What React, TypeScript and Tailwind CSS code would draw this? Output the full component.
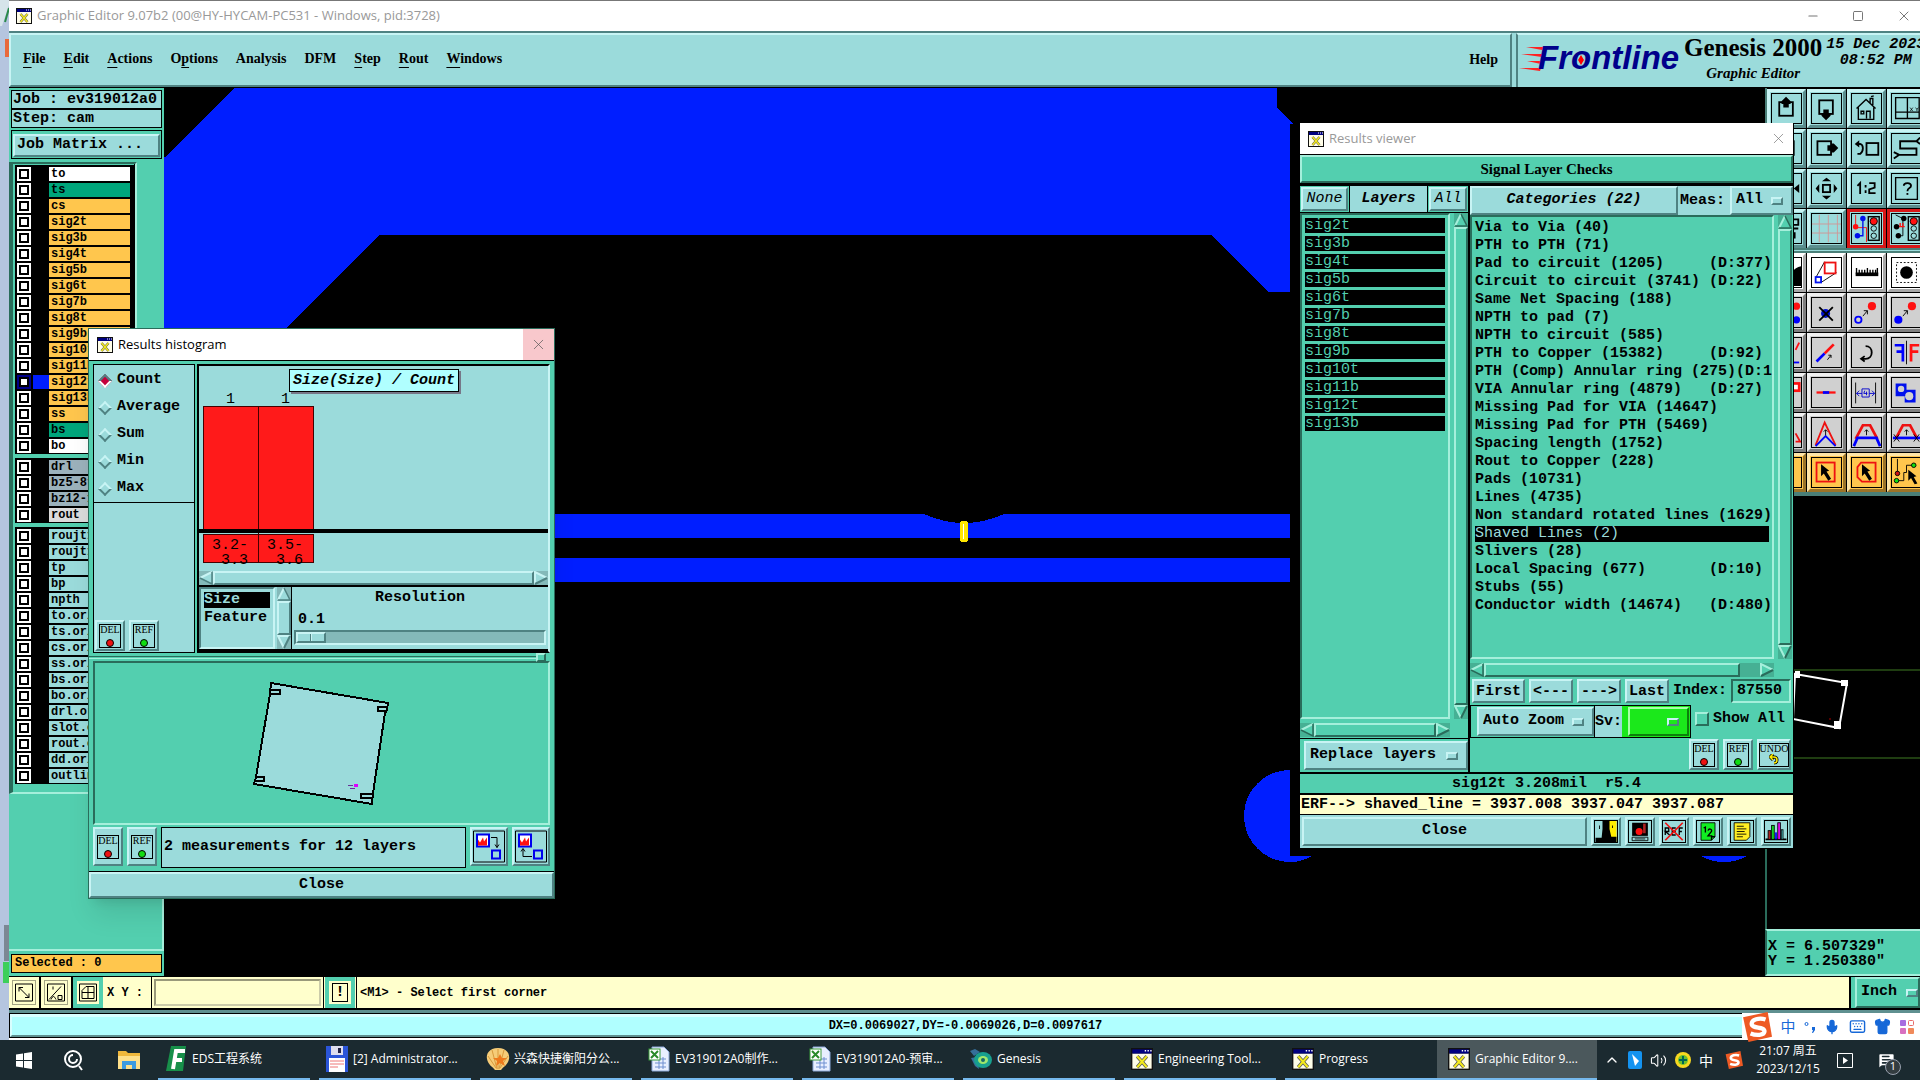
import { useState } from "react";
import type { ReactNode } from "react";
import clsx from "clsx";
import { ChevronUp, Minus, Square, X, Volume2, Mic, Keyboard, Shirt, MessageSquareText } from "lucide-react";

const mono = "font-['Liberation_Mono',monospace] font-bold";
const serif = "font-['Liberation_Serif',serif] font-bold";
const sans = "font-['Open_Sans','Noto_Sans_CJK_SC',sans-serif] font-normal";

const raised = "border-2 border-t-[#c8f4f4] border-l-[#c8f4f4] border-b-[#4f8282] border-r-[#4f8282] bg-[#9bdbdb]";
const raisedTeal = "border-2 border-t-[#a5efdb] border-l-[#a5efdb] border-b-[#2a6c5b] border-r-[#2a6c5b] bg-[#53cfaf]";
const sunkenTeal = "border-2 border-t-[#2a6c5b] border-l-[#2a6c5b] border-b-[#a5efdb] border-r-[#a5efdb] bg-[#53cfaf]";

type Layer = { name: string; kind: "white" | "green" | "orange" | "gray" | "light" | "aqua" };

const layerColors = {
  white: "bg-white",
  green: "bg-[#00a67c]",
  orange: "bg-[#ffc64d]",
  gray: "bg-[#9cb2bc]",
  light: "bg-[#dcdcdc]",
  aqua: "bg-[#9bdbdb]",
};

const signals = ["sig2t", "sig3b", "sig4t", "sig5b", "sig6t", "sig7b", "sig8t", "sig9b", "sig10t", "sig11b", "sig12t", "sig13b"];

const layerGroups: Layer[][] = [
  [
    { name: "to", kind: "white" },
    { name: "ts", kind: "green" },
    { name: "cs", kind: "orange" },
    ...signals.map((name) => ({ name, kind: "orange" as const })),
    { name: "ss", kind: "orange" },
    { name: "bs", kind: "green" },
    { name: "bo", kind: "white" },
  ],
  [
    { name: "drl", kind: "gray" },
    { name: "bz5-8t", kind: "gray" },
    { name: "bz12-1", kind: "gray" },
    { name: "rout", kind: "light" },
  ],
  ["roujt1", "roujt1", "tp", "bp", "npth", "to.ori", "ts.ori", "cs.ori", "ss.ori", "bs.ori", "bo.ori", "drl.ori", "slot.ori", "rout.ori", "dd.ori", "outline"].map(
    (name) => ({ name, kind: "aqua" as const })
  ),
];

const categories: [string, string][] = [
  ["Via to Via (40)", ""],
  ["PTH to PTH (71)", ""],
  ["Pad to circuit (1205)", "(D:377)"],
  ["Circuit to circuit (3741)", "(D:22)"],
  ["Same Net Spacing (188)", ""],
  ["NPTH to pad (7)", ""],
  ["NPTH to circuit (585)", ""],
  ["PTH to Copper (15382)", "(D:92)"],
  ["PTH (Comp) Annular ring (275)", "(D:1"],
  ["VIA Annular ring (4879)", "(D:27)"],
  ["Missing Pad for VIA (14647)", ""],
  ["Missing Pad for PTH (5469)", ""],
  ["Spacing length (1752)", ""],
  ["Rout to Copper (228)", ""],
  ["Pads (10731)", ""],
  ["Lines (4735)", ""],
  ["Non standard rotated lines (1629)", ""],
  ["Shaved Lines (2)", ""],
  ["Slivers (28)", ""],
  ["Local Spacing (677)", "(D:10)"],
  ["Stubs (55)", ""],
  ["Conductor width (14674)", "(D:480)"],
];

function WindowIcon({ size = 16 }: { size?: number }) {
  return (
    <svg width={size} height={size} viewBox="0 0 16 16" className="shrink-0">
      <rect width="16" height="16" fill="#111" />
      <rect x="1" y="4" width="14" height="11" fill="#fffde8" />
      <path d="M4.500 6l7 8M11.500 6l-7 8" stroke="#555" strokeWidth="2.500" />
      <path d="M4.500 6l7 8M11.500 6l-7 8" stroke="#f4ea1c" strokeWidth="1.500" />
      <rect x="1" y="1" width="14" height="3" fill="#000080" />
      <path d="M10 2h1M12 2h1M14 2h1" stroke="#fff" />
    </svg>
  );
}

/* Toolbar glyphs, drawn on a 32x30 grid */
const traffic = (
  <>
    <rect x="18" y="2" width="12" height="26" fill="#9bdbdb" stroke="#000" strokeWidth="1.500" />
    <circle cx="24" cy="7" r="4" fill="#f11" stroke="#000" />
    <circle cx="24" cy="15" r="3" fill="none" stroke="#000" />
    <circle cx="24" cy="23" r="3" fill="none" stroke="#000" />
  </>
);

const glyphs: Record<string, ReactNode> = {
  up: <><rect x="8" y="8" width="15" height="15" fill="none" stroke="#000" strokeWidth="2" /><path d="M15.500 2l5 5v3h-2v4h-6v-4h-2V7z" /></>,
  down: <><rect x="8" y="6" width="15" height="15" fill="none" stroke="#000" strokeWidth="2" /><path d="M15.500 28l-5-5v-3h2v-4h6v4h2v3z" /></>,
  home: <><path d="M5 15L15.500 5 26 15M7 14v13h17V14M20 9V4h3v7M21 2l3-1M10 18h3v3h-3zM16 26v-8h4v8" fill="none" stroke="#000" strokeWidth="1.500" /></>,
  panes: <><path d="M4 3h26v23H4zM17 3v23M4 19h26" fill="none" stroke="#000" strokeWidth="1.500" /><path d="M20 14l3 4M23 14l-3 4M26 14l1.500 2 1.500-2M27.500 16v2" fill="none" stroke="#000" strokeWidth=".8" /></>,
  left: <><rect x="9" y="7" width="15" height="15" fill="none" stroke="#000" strokeWidth="2" /><path d="M3 14l6-6v12z" /></>,
  right: <><rect x="6" y="7" width="15" height="15" fill="none" stroke="#000" strokeWidth="2" /><path d="M29 14.500l-5-5h-3v2h-4v6h4v2h3z" /></>,
  back: <><rect x="16" y="9" width="13" height="13" fill="none" stroke="#000" strokeWidth="2" /><path d="M5 10h4c4 1 4 8 0 11H6" fill="none" stroke="#000" strokeWidth="2" /><path d="M3 10l5-4v8z" /></>,
  snake: <path d="M8 22h19v-7H9V7h18l4-4M27 7l4 3M8 22l-6-3M8 22l-6 4" fill="none" stroke="#000" strokeWidth="2" />,
  zoomOut: <path d="M30 10v10l-6-5z" />,
  pan: <><rect x="12" y="11" width="8" height="8" fill="none" stroke="#000" strokeWidth="2" /><path d="M16 3l5 4H11zM16 27l5-4H11zM4 15l4-5v10zM28 15l-4-5v10z" /></>,
  ratio: <path d="M6 12l3-3v12M15 11v3M15 17v3M19 9h6v5l-6 2v4h7" fill="none" stroke="#000" strokeWidth="2" />,
  help: <><path d="M4 3h24v24H4z" fill="none" stroke="#000" strokeWidth="1.500" /><path d="M13 12c0-4 8-4 8 0 0 3-4 2-4 6" fill="none" stroke="#000" strokeWidth="2" /><path d="M16 20h2v2h-2z" /></>,
  info: <path d="M21 5h8v6h-8zM21 15h8M21 20h4v6" fill="none" stroke="#000" strokeWidth="2" />,
  grid: <path d="M8 0v30M18 0v30M28 0v30M0 10h32M0 20h32" stroke="#cf9696" fill="none" />,
  netBlue: <>{traffic}<path d="M4 0v14h12v16" fill="none" stroke="#f11" /><path d="M12 5v18H6" fill="none" stroke="#0010ee" strokeWidth="1.500" /><circle cx="12" cy="4" r="3" fill="#0010ee" /><circle cx="6" cy="23" r="3" fill="#0010ee" /><circle cx="4" cy="13" r="3" fill="#f11" /></>,
  netBlack: <>{traffic}<path d="M4 0l8 4v19H6" fill="none" stroke="#000" /><path d="M5 13h9M9 9v4M12 9v4" stroke="#f11" strokeWidth="1.500" /><circle cx="13" cy="4" r="3" /><circle cx="5" cy="13" r="3" /><circle cx="7" cy="23" r="3" /></>,
  mask: <path d="M18 30c0-14 6-20 14-22v22z" />,
  scale: <><path d="M4 21L14 3M10 26L27 15" stroke="#000" fill="none" /><rect x="14" y="4" width="12" height="12" fill="#fff" stroke="#e11" strokeWidth="2" /><rect x="4" y="20" width="6" height="6" fill="#fff" stroke="#0010ee" strokeWidth="2" /></>,
  ruler: <><rect x="4" y="15" width="25" height="4" /><path d="M5 10v7M8 12v5M11 12v5M14 12v5M17 10v7M20 12v5M23 12v5M26 12v5M28 10v7" stroke="#000" strokeWidth="1.500" /></>,
  select: <><rect x="5" y="4" width="22" height="22" fill="none" stroke="#000" strokeDasharray="2 2" /><circle cx="16" cy="15" r="7" /></>,
  dots: <><circle cx="27" cy="8" r="4" fill="#f11" /><circle cx="27" cy="23" r="4" fill="#00f" /></>,
  erase: <><circle cx="15" cy="16" r="5" fill="#0010cc" /><path d="M8 9l15 15M23 9L8 24" stroke="#000" strokeWidth="2" /></>,
  move: <><circle cx="22" cy="8" r="4.500" fill="#f11" /><circle cx="7" cy="23" r="3.500" fill="none" stroke="#00f" strokeWidth="2" /><path d="M12 19l5-6M17 17v-4h-4" stroke="#000" fill="none" /></>,
  copy: <><circle cx="22" cy="8" r="4.500" fill="#f11" /><circle cx="7" cy="23" r="4.500" fill="#00f" /><path d="M12 19l5-6M17 17v-4h-4" stroke="#000" fill="none" /></>,
  angle: <><path d="M26 12l4-8" stroke="#f11" strokeWidth="2" /><path d="M24 26h6" stroke="#00f" strokeWidth="2" /></>,
  stretch: <><path d="M5 25L14 16" stroke="#00f" strokeWidth="3" /><path d="M14 16L24 6" stroke="#f11" strokeWidth="3" /><path d="M17 23l4-5M21 21v-3h-3" stroke="#000" fill="none" /></>,
  rotate: <path d="M15 8c9 0 9 14 0 14h-4M14 19l-4 3 4 3" fill="none" stroke="#000" strokeWidth="2" />,
  mirror: <><path d="M16 2v26" stroke="#000" /><path d="M3 7h9v18M12 14H5" fill="none" stroke="#00f" strokeWidth="3" /><path d="M30 7h-9v18M21 14h8" fill="none" stroke="#f11" strokeWidth="3" /></>,
  shape: <rect x="22" y="5" width="8" height="8" fill="#fff" stroke="#f11" strokeWidth="3" />,
  line: <><path d="M5 15h21" stroke="#f11" strokeWidth="2.500" /><path d="M12 15h7" stroke="#00f" strokeWidth="3" /></>,
  spacing: <><path d="M4 4v23M26 4v23" stroke="#000" /><path d="M5 16h6M19 16h6M8 13l-3 3 3 3M22 13l3 3-3 3M11 11h8v9h-8zM14 13l-1 3h4M16 14v4" fill="none" stroke="#00c" /></>,
  merge: <><path d="M4 5h12v7h10v14H14v-7H4z" fill="#0010ee" /><circle cx="10" cy="11" r="3.500" fill="#d0d0d0" /><circle cx="19" cy="19" r="4.500" fill="#d0d0d0" /></>,
  arch: <path d="M26 16l5 9h-5" stroke="#e11" strokeWidth="2" fill="none" />,
  peak: <><path d="M4 29L14 4l12 25" fill="none" stroke="#e11" strokeWidth="2" /><path d="M4 30l11-11 11 11" fill="none" stroke="#00f" strokeWidth="2" /><path d="M15 18v-6M13 14l2-2 2 2" stroke="#000" fill="none" /></>,
  trapeze: <><path d="M4 22L12 7h8l8 15" fill="none" stroke="#e11" strokeWidth="3" /><path d="M2 30l4-9h21l4 9" fill="none" stroke="#00f" strokeWidth="3" /><path d="M16 18v-6M14 14l2-2 2 2" stroke="#000" fill="none" /></>,
  trapezeCut: <><path d="M4 22L12 7h8l8 15" fill="none" stroke="#e11" strokeWidth="3" /><path d="M1 21h30" stroke="#00f" strokeWidth="3" /><path d="M16 18v-6M14 14l2-2 2 2M2 17l6 8M8 17l-6 8M24 17l6 8M30 17l-6 8" stroke="#000" fill="none" /></>,
  blank: <></>,
  pick: <><rect x="5" y="4" width="20" height="21" fill="none" stroke="#e11" strokeWidth="2" /><path d="M10 6l9 7-3 1 5 8-3 2-5-8-3 3z" /></>,
  pickPoly: <><path d="M10 4h16v21H11l-5-5V9z" fill="none" stroke="#e11" strokeWidth="2" /><path d="M11 6l9 7-3 1 5 8-3 2-5-8-3 3z" /></>,
  pickNet: <><path d="M6 0v15M5 24h8V15h3V7h8" fill="none" stroke="#000" /><circle cx="6" cy="16" r="2.500" fill="#c11" stroke="#000" /><circle cx="5" cy="24" r="2.500" fill="#1d1" stroke="#000" /><circle cx="24" cy="7" r="2.500" fill="#1d1" stroke="#000" /><path d="M18 12l9 7-3 1 4 7-3 1-4-7-3 3z" /></>,
};

type Tool = { id: string; tone?: "aqua" | "red" | "white" | "gray" | "orange" };
const navTools: Tool[] = [
  "up", "down", "home", "panes", "left", "right", "back", "snake", "zoomOut", "pan", "ratio", "help", "info", "grid",
].map((id) => ({ id }));
navTools.push({ id: "netBlue", tone: "red" }, { id: "netBlack", tone: "red" });

const editTools: Tool[] = [
  ...["mask", "scale", "ruler", "select"].map((id) => ({ id, tone: "white" as const })),
  ...["dots", "erase", "move", "copy", "angle", "stretch", "rotate", "mirror", "shape", "line", "spacing", "merge", "arch", "peak", "trapeze", "trapezeCut"].map(
    (id) => ({ id, tone: "gray" as const })
  ),
  ...["blank", "pick", "pickPoly", "pickNet"].map((id) => ({ id, tone: "orange" as const })),
];

const toolTones = {
  aqua: "bg-[#9bdbdb] border-t-[#c8f4f4] border-l-[#c8f4f4] border-b-[#5b8e8e] border-r-[#5b8e8e]",
  red: "bg-[#9bdbdb] border-[#d81818]",
  white: "bg-white border-t-white border-l-white border-b-[#a8a8a8] border-r-[#a8a8a8]",
  gray: "bg-[#d0d0d0] border-t-[#f0f0f0] border-l-[#f0f0f0] border-b-[#808080] border-r-[#808080]",
  orange: "bg-[#ffc64d] border-t-[#ffe6a8] border-l-[#ffe6a8] border-b-[#9c7428] border-r-[#9c7428]",
};

function ToolButton({ id, tone = "aqua" }: Tool) {
  return (
    <button aria-label={id} className={clsx("h-[39px] w-[39px] border-3 p-px", toolTones[tone])}>
      <svg viewBox="0 0 32 30" className="h-full w-full border border-black">
        {glyphs[id]}
      </svg>
    </button>
  );
}

function SmallButton({ label, color, className }: { label: string; color?: string; className?: string }) {
  return (
    <button className={clsx(raised, "flex items-center justify-center", className)}>
      <span className="flex h-6 min-w-[22px] flex-col items-center border border-black">
        <span className="font-['Liberation_Serif',serif] text-[10px] leading-[10px] font-normal">{label}</span>
        {color ? (
          <svg width="8" height="8" viewBox="0 0 8 8" className="mt-1">
            <circle cx="4" cy="4" r="3.500" fill={color} stroke="#000" />
          </svg>
        ) : (
          <svg width="10" height="11" viewBox="0 0 10 11">
            <path d="M2 3h3c4 0 4 6 0 6M4 0L1 3l3 3" fill="none" stroke="#000" strokeWidth="3" />
            <path d="M2 3h3c4 0 4 6 0 6M4 0L1 3l3 3" fill="none" stroke="#fe0" strokeWidth="1.500" />
          </svg>
        )}
      </span>
    </button>
  );
}

function OptionMenu({ label, options, className, teal }: { label: string; options: string[]; className: string; teal?: boolean }) {
  return (
    <div className={clsx("relative", className)}>
      <select aria-label={label} className={clsx("h-full w-full appearance-none bg-transparent pl-1 text-[15px]", mono)}>
        {options.map((o) => (
          <option key={o}>{o}</option>
        ))}
      </select>
      <span
        className={clsx(
          "pointer-events-none absolute top-1/2 h-2 w-3 -translate-y-1/2 border-2 border-t-[#c8f4f4] border-r-[#4f8282] border-b-[#4f8282] border-l-[#c8f4f4]",
          teal ? "right-0" : "right-2"
        )}
      />
    </div>
  );
}

function ScrollBar({ vertical, aqua, fill = "flex-1", className }: { vertical?: boolean; aqua?: boolean; fill?: string; className?: string }) {
  const dark = aqua ? "#4f8282" : "#2a6c5b";
  const light = aqua ? "#c8f4f4" : "#a5efdb";
  const face = aqua ? "#9bdbdb" : "#53cfaf";
  return (
    <div className={clsx("flex", vertical ? "w-[14px] flex-col" : "h-[14px]", aqua ? "bg-[#84b9b9]" : "bg-[#46b094]", className)}>
      <svg width="14" height="14" viewBox="0 0 14 14" className="shrink-0">
        <path d={vertical ? "M7 1L1 13h12z" : "M1 7l12-6v12z"} fill={face} />
        <path d={vertical ? "M7 1L1 13" : "M1 7l12-6"} stroke={light} strokeWidth="2" />
        <path d={vertical ? "M7 1l6 12H1" : "M1 7l12 6V1"} fill="none" stroke={dark} strokeWidth="1.500" />
      </svg>
      <div className={clsx(aqua ? raised : raisedTeal, fill)} />
      {fill !== "flex-1" && <div className="flex-1" />}
      <svg width="14" height="14" viewBox="0 0 14 14" className="shrink-0">
        <path d={vertical ? "M7 13L1 1h12z" : "M13 7L1 1v12z"} fill={face} />
        <path d={vertical ? "M7 13L1 1h12" : "M13 7L1 1v12"} fill="none" stroke={light} strokeWidth="2" />
        <path d={vertical ? "M7 13l6-12" : "M13 7L1 13"} stroke={dark} strokeWidth="2" />
      </svg>
    </div>
  );
}

const menus: [string, string, string][] = [
  ["", "F", "ile"], ["", "E", "dit"], ["", "A", "ctions"], ["O", "p", "tions"], ["Analysis", "", ""],
  ["DFM", "", ""], ["", "S", "tep"], ["", "R", "out"], ["", "W", "indows"],
];

function MenuBar() {
  return (
    <div className="flex h-[57px] shrink-0 border-t-2 border-b border-t-[#4f8282] border-b-black bg-[#9bdbdb]">
      <nav className={clsx("flex flex-1 items-center gap-[18px] pr-3 pb-0.5 pl-3 text-[14px]", raised, serif)}>
        {menus.map(([pre, key, post]) => (
          <button key={pre + key + post} className="leading-5">
            {pre}
            <span className="underline underline-offset-4">{key}</span>
            {post}
          </button>
        ))}
        <button className="ml-auto">Help</button>
      </nav>
      <div className="ml-1 flex w-[404px] overflow-hidden border-t-2 border-l-2 border-t-[#c8f4f4] border-l-[#4f8282] whitespace-nowrap">
        <svg width="166" height="52" viewBox="0 0 166 52" className="shrink-0">
          <path d="M8 12h18l-2 3zM3 19h22l-1 3zM9 26h15l-1 3zM1 33h22l-1 3z" fill="#f22" />
          <text x="20" y="34" className="font-['Liberation_Sans',sans-serif] text-[33px] font-bold italic" fill="#00008b">
            Frontline
          </text>
          <path d="M63 20l3 5-3 5-3-5z" fill="#f00" />
        </svg>
        <div className={clsx("text-center", serif)}>
          <div className="text-[25px] leading-[26px]">Genesis 2000</div>
          <div className="text-[15px] leading-6 italic">Graphic Editor</div>
        </div>
        <div className={clsx("pt-0.5 pl-1 text-center text-[15px] leading-4 italic", mono)}>
          <div>15 Dec 2023</div>
          <div>08:52 PM</div>
        </div>
      </div>
    </div>
  );
}

function LayerRow({ layer }: { layer: Layer }) {
  const active = layer.name === "sig12t";
  return (
    <li>
      <label className="flex h-4 items-center pl-[2px]">
        <input
          type="checkbox"
          className={clsx(
            "h-[14px] w-[14px] appearance-none border-2 outline-2 -outline-offset-4 outline-black",
            active ? "border-[#000088] bg-white outline-[#000088]" : "border-white bg-white"
          )}
        />
        <span className={clsx("ml-0.5 h-[14px] w-4", active && "bg-[#001eff]")} />
        <span className={clsx("h-[14px] w-[81px] pl-0.5 text-[12px] leading-[14px] text-black", layerColors[layer.kind])}>{layer.name}</span>
      </label>
    </li>
  );
}

function Sidebar() {
  return (
    <aside className={clsx("flex w-[155px] shrink-0 flex-col bg-[#53cfaf]", mono)}>
      <div className="mx-[2px] mt-[2px] h-[19px] border border-black bg-[#9bdbdb] pl-px text-[15px] leading-[18px] whitespace-nowrap">Job : ev319012a0</div>
      <div className="mx-[2px] h-[19px] border border-black bg-[#9bdbdb] pl-px text-[15px] leading-[18px]">Step: cam</div>
      <div className="mx-[2px] mt-[2px] border border-black p-px">
        <button className={clsx("h-[23px] w-full pl-0.5 text-left text-[15px] leading-[18px]", raised)}>Job Matrix ...</button>
      </div>
      <div className="mt-[3px] mr-[27px] border-t-2 border-r-2 border-b-2 border-l-4 border-t-[#2a6c5b] border-r-[#a5efdb] border-b-[#a5efdb] border-l-[#2a6c5b] pb-2">
        <div className="flex flex-col gap-1 border-r border-black pt-px">
          {layerGroups.map((group, i) => (
            <ul key={i} className="ml-0.5 bg-black pt-px">
              {group.map((layer, j) => (
                <LayerRow key={j} layer={layer} />
              ))}
            </ul>
          ))}
        </div>
      </div>
      <div className="flex-1 border-r-2 border-b-2 border-[#a5efdb]" />
      <div className="mx-[2px] mt-[3px] mb-[3px] h-[19px] border border-black bg-[#ffc64d] pl-[3px] text-[12px] leading-[17px]">Selected : 0</div>
    </aside>
  );
}

function Canvas() {
  return (
    <svg className="h-full flex-1 bg-black" shapeRendering="crispEdges">
      <g fill="#001eff">
        <path d="M71 0H1113V20L1130 36H1126V204H1105L1047 147H215L70 293H0V70z" />
        <path d="M300 426H760Q800 444 840 426H1126V450H300z" />
        <path d="M300 470H1126V494H300z" />
        <path d="M1126 682A46 46 0 0 0 1126 774H1130A46 46 0 0 0 1148 768H1126z" />
        <path d="M1537 768A46 46 0 0 0 1583 768z" />
      </g>
      <rect x="796" y="433" width="8" height="21" rx="3" fill="#ffe600" />
      <path d="M799 436v15" stroke="#fff" />
    </svg>
  );
}

function RightPanel() {
  return (
    <div className="flex w-[155px] shrink-0 flex-col overflow-hidden bg-black">
      <div className="border-b-4 border-l-2 border-[#4a7f78]">
        <div className="grid grid-cols-[repeat(4,40px)] gap-y-px bg-black pt-px">
          {navTools.map((t) => (
            <ToolButton key={t.id} {...t} />
          ))}
        </div>
        <div className="h-[5px] border-y-2 border-[#4a7f78] bg-[#9bdbdb]" />
        <div className="grid grid-cols-[repeat(4,40px)] gap-y-px bg-black">
          {editTools.map((t) => (
            <ToolButton key={t.id} {...t} />
          ))}
        </div>
      </div>
      <svg className="w-full flex-1 border-l-2 border-[#2a6c5b]">
        <path d="M0 174h156M0 262h156" stroke="#3f7a22" />
        <path d="M28 178l52 9-8 45-46-9z" fill="none" stroke="#fff" strokeWidth="2" />
        <path d="M28 175h5v7h-5zM74 184h7v6h-7zM67 225h7v8h-7z" fill="#fff" />
        <path d="M62 223h2" stroke="#a00" />
      </svg>
      <div className={clsx("h-[47px] border-y-2 border-l-2 border-[#a5efdb] border-l-[#2a6c5b] bg-[#53cfaf] pt-2 pl-px text-[15px] leading-[15px]", mono)}>
        <div>X = 6.507329"</div>
        <div>Y = 1.250380"</div>
      </div>
    </div>
  );
}

function CommandBar() {
  return (
    <div className={clsx("mt-px flex h-[33px] shrink-0 border-b-2 border-black bg-[#ffffcc] text-[12px]", mono)}>
      <button aria-label="Corner mode" className="w-8 border-r-2 border-black p-1">
        <svg viewBox="0 0 22 22" className="h-full w-full outline-1 outline-[#a5a584]">
          <path d="M2.500 2.500h17v17h-17zM6 6l10 10M6 10V6h4M16 12v4h-4" fill="none" stroke="#000" />
        </svg>
      </button>
      <button aria-label="Slope mode" className="w-8 border-r-2 border-black p-1">
        <svg viewBox="0 0 22 22" className="h-full w-full outline-1 outline-[#a5a584]">
          <path d="M2.500 2.500h17v17h-17zM4 18L16 5M8 5v3M6 18c2-4 3-4 5 0M13 14h4v4h-4z" fill="none" stroke="#000" />
        </svg>
      </button>
      <button aria-label="Grid mode" className="w-[30px] border-4 border-[#53cfaf]">
        <svg viewBox="0 0 22 22" className="h-full w-full">
          <path d="M2.500 2.500h17v17h-17zM5 9l4-4h8v12H5zM11 5v12M5 11h12" fill="none" stroke="#000" />
        </svg>
      </button>
      <label htmlFor="xy" className="flex w-12 items-center pl-1 whitespace-pre">X Y :</label>
      <div className="w-[173px] border-x border-black p-0.5">
        <input id="xy" className="h-full w-full border-2 border-t-[#99997a] border-r-[#ccccaa] border-b-[#ccccaa] border-l-[#99997a] bg-[#ffffcc] px-1 outline-none" />
      </div>
      <button className="mx-px w-[30px] border-4 border-[#53cfaf]">
        <span className="mx-auto block h-[19px] w-4 border border-black text-[15px] leading-[17px]">!</span>
      </button>
      <div className="flex flex-1 items-center border-l border-black pl-[3px]">&lt;M1&gt; - Select first corner</div>
      <div className="w-[71px] border-l-2 border-black bg-[#53cfaf] pl-1">
        <OptionMenu label="Units" options={["Inch"]} className={clsx("h-full", raisedTeal)} teal />
      </div>
    </div>
  );
}

function TitleBar({ title, muted, hot }: { title: string; muted?: boolean; hot?: boolean }) {
  return (
    <div className={clsx("flex h-[31px] items-center bg-white pl-2 text-[13px]", sans, muted && "text-[#999]")}>
      <WindowIcon />
      <span className="ml-[5px]">{title}</span>
      <button aria-label="Close" className={clsx("ml-auto flex h-full items-center justify-center", hot ? "w-[31px] bg-[#f8c8cc]" : "w-[29px]")}>
        <X size={17} strokeWidth={1} className={hot ? "text-[#555]" : "text-[#777]"} />
      </button>
    </div>
  );
}

const stats = ["Count", "Average", "Sum", "Min", "Max"];

function HistogramWindow() {
  const [stat, setStat] = useState("Count");

  return (
    <section className={clsx("absolute top-[328px] left-[88px] w-[467px] border border-[#2a6c5b] bg-[#53cfaf] text-[15px] shadow-xl", mono)}>
      <TitleBar title="Results histogram" hot />
      <div className="flex h-[293px] gap-[2px] border-t border-black px-[4px] pt-[3px]">
        <div className="flex w-[102px] flex-col border border-black bg-[#9bdbdb]">
          <fieldset className="border-b border-black pt-0.5">
            {stats.map((s) => (
              <label key={s} className="flex h-[27px] items-center gap-[7px] pl-1.5">
                <input
                  type="radio"
                  name="stat"
                  checked={stat === s}
                  onChange={() => setStat(s)}
                  className="h-[10px] w-[10px] rotate-45 appearance-none border-2 border-t-[#c8f4f4] border-r-[#4f8282] border-b-[#4f8282] border-l-[#c8f4f4] checked:border-t-[#4f8282] checked:border-r-white checked:border-b-white checked:border-l-[#4f8282] checked:bg-[#c4003c]"
                />
                {s}
              </label>
            ))}
          </fieldset>
          <div className="mt-auto flex gap-1 p-px">
            <SmallButton label="DEL" color="#e11" className="h-[31px] w-[30px]" />
            <SmallButton label="REF" color="#1d1" className="h-[31px] w-[30px]" />
          </div>
        </div>
        <div className="flex flex-1 flex-col border-2 border-black border-r-[#c8f4f4] bg-[#9bdbdb]">
          <div className="relative h-[205px]">
            <div className="absolute top-[3px] left-[90px] z-10 h-[23px] w-[170px] border border-black bg-[#b0ffff] text-center leading-[22px] italic shadow-[2px_2px_0_#778]">
              Size(Size) / Count
            </div>
            <svg width="100%" height="205" shapeRendering="crispEdges">
              <path d="M4.500 40.500h110v124H4.500zM4.500 168.500h110v28H4.500z" fill="#ff1a1a" stroke="#400" />
              <path d="M59.500 40v157" stroke="#400" />
              <rect y="163" width="100%" height="4" />
              <g fontSize="15" fontWeight="400">
                <text x="27" y="37">1</text>
                <text x="82" y="37">1</text>
                <text x="13" y="183">3.2-</text>
                <text x="22" y="198">3.3</text>
                <text x="68" y="183">3.5-</text>
                <text x="77" y="198">3.6</text>
              </g>
            </svg>
          </div>
          <ScrollBar aqua />
          <div className="flex flex-1 border-t-2 border-b-2 border-black">
            <ul className="w-[76px] border-2 border-t-[#4f8282] border-r-[#c8f4f4] border-b-[#c8f4f4] border-l-[#4f8282] px-[3px] pt-[3px] leading-[16px]">
              <li className="bg-black text-[#9bdbdb]">Size</li>
              <li className="mt-0.5">Feature</li>
            </ul>
            <ScrollBar vertical aqua className="ml-0.5" />
            <div className="flex flex-1 flex-col border-l border-black px-0.5">
              <div className="text-center leading-[22px]">Resolution</div>
              <label htmlFor="res" className="mt-[3px] pl-1 leading-4">0.1</label>
              <div className="mt-0.5 h-[15px] border-2 border-t-[#4f8282] border-r-[#c8f4f4] border-b-[#c8f4f4] border-l-[#4f8282] bg-[#84b9b9]">
                <input
                  id="res"
                  type="range"
                  defaultValue={0}
                  className="block h-[11px] w-full appearance-none [&::-webkit-slider-thumb]:h-[11px] [&::-webkit-slider-thumb]:w-[30px] [&::-webkit-slider-thumb]:appearance-none [&::-webkit-slider-thumb]:border-2 [&::-webkit-slider-thumb]:border-t-[#c8f4f4] [&::-webkit-slider-thumb]:border-r-[#4f8282] [&::-webkit-slider-thumb]:border-b-[#4f8282] [&::-webkit-slider-thumb]:border-l-[#c8f4f4] [&::-webkit-slider-thumb]:bg-[#9bdbdb] [&::-webkit-slider-thumb]:bg-[linear-gradient(90deg,transparent_12px,#4f8282_12px,#4f8282_13px,#c8f4f4_13px,#c8f4f4_14px,transparent_14px)]"
                />
              </div>
            </div>
          </div>
        </div>
      </div>
      <div className="flex h-2 items-center">
        <div className="h-[3px] flex-1 border-t border-b border-t-[#2a6c5b] border-b-[#a5efdb]" />
        <div className={clsx("mr-2 h-[9px] w-[10px]", raisedTeal)} />
      </div>
      <div className={clsx("mx-[4px] h-[164px]", sunkenTeal)}>
        <svg width="100%" height="100%" shapeRendering="crispEdges">
          <path d="M176 20L293 40 292 47 290 50 278 130 277 141 159 121 161 114 175 31z" fill="#9bdbdb" stroke="#000" strokeWidth="2" />
          <path d="M176 27h9v4h-9M292 44h-9v4h7M160 114h9v4h-9M277 131h-11v4h11" fill="none" stroke="#000" strokeWidth="2" />
          <path d="M253 122h5M255 125h5" stroke="#639" />
          <rect x="259" y="121" width="4" height="3" fill="#d0f" />
        </svg>
      </div>
      <div className="flex h-[47px] gap-1 border-b border-black px-[4px] pt-[2px] pb-[3px]">
        <SmallButton label="DEL" color="#e11" className="mb-0.5 w-[30px]" />
        <SmallButton label="REF" color="#1d1" className="mb-0.5 w-[30px]" />
        <div className="flex flex-1 items-center border border-black bg-[#9bdbdb] pl-0.5 whitespace-nowrap">2 measurements for 12 layers</div>
        {[false, true].map((back) => (
          <button key={String(back)} aria-label={back ? "Restore view" : "Send view"} className={clsx("mb-0.5 w-[38px] p-px", raised)}>
            <svg viewBox="0 0 32 32" className="h-full w-full">
              <path d="M.5 .5h31v31H.5z" fill="none" stroke="#000" />
              <rect x="4" y="4" width="12" height="12" fill="#fff" stroke="#00e" strokeWidth="2" />
              <path d="M5 15V9l2 3 3-5 1 4 3-4v8z" fill="#f11" />
              <rect x="19" y="20" width="8" height="8" fill="none" stroke="#00e" strokeWidth="2" />
              <path d={back ? "M17 26H8v-7M6 21l2-3 2 3" : "M18 7h6v10M22 14l2 3 2-3"} fill="none" stroke="#000" />
            </svg>
          </button>
        ))}
      </div>
      <button className={clsx("block h-[26px] w-full leading-[22px]", raised)}>Close</button>
    </section>
  );
}

const viewerActions: { id: string; art: ReactNode }[] = [
  { id: "Exit", art: <><rect width="24" height="24" fill="#9bdbdb" /><rect x="14" width="10" height="24" fill="#fe0" /><path d="M8 0h8v9l2 9h6v6H0v-5h7l1-10zM4 5h1v4H4zM19 5h1v3h-1z" /></> },
  { id: "Snapshot", art: <><rect width="24" height="24" fill="#9bdbdb" /><rect x="3" y="2" width="18" height="15" /><circle cx="11" cy="12" r="4" fill="#f11" /><path d="M17 3v11" stroke="#a22" strokeWidth="3" /><path d="M3 18.500h18v4H3zM6 20.500h12" fill="none" stroke="#000" /></> },
  { id: "Drop reference", art: <><path d="M2 16V8h4v4H2l5 4M14 8h-4v8h4M10 12h4M22 8h-4v8M18 12h3" fill="none" stroke="#000" strokeWidth="1.500" /><path d="M2 2l20 20M22 2L2 22" stroke="#e11" strokeWidth="2" /></> },
  { id: "Numbers", art: <><path d="M4 2h16v16l-4 4H4z" fill="#1e2" stroke="#000" /><path d="M7 8l2-1v6M12 11c1-3 5-2 4 1l-4 5h5M16 22v-4h4" fill="none" stroke="#000" strokeWidth="1.500" /></> },
  { id: "Report", art: <><path d="M3 2h18v16l-4 4H3z" fill="#fe2" stroke="#000" /><path d="M6 6h8M6 9h11M6 12h9M6 15h11M6 18h7" stroke="#000" /></> },
  { id: "Histogram", art: <><path d="M0 21h24" stroke="#000" strokeWidth="2" /><rect x="3" y="11" width="3" height="10" fill="#a22" stroke="#000" /><rect x="7" y="5" width="3" height="16" fill="#1d2" stroke="#000" /><rect x="11" y="13" width="2" height="8" fill="#00f" /><rect x="14" y="2" width="3" height="19" fill="#e0e" stroke="#000" /><rect x="18" y="10" width="2" height="11" fill="#5dd" stroke="#000" /></> },
];

function ResultsViewer() {
  const [selected, setSelected] = useState("Shaved Lines (2)");

  return (
    <section className={clsx("absolute top-[123px] right-[126px] w-[495px] border border-t-0 border-black bg-black text-[15px]", mono)}>
      <TitleBar title="Results viewer" muted />
      <h2 className={clsx("mt-px h-[28px] text-center text-[15px] leading-[24px]", raisedTeal, serif)}>Signal Layer Checks</h2>
      <div className="mt-[3px] flex gap-[2px]">
        <div className="flex w-[168px] flex-col bg-[#53cfaf]">
          <div className="flex h-[27px] border-b border-black">
            <div className="w-[50px] border-r border-black p-px"><button className={clsx("h-full w-full font-normal italic leading-5", raised)}>None</button></div>
            <div className="flex-1 bg-[#9bdbdb] text-center leading-[26px] italic">Layers</div>
            <div className="w-[41px] border-l border-black p-px"><button className={clsx("h-full w-full font-normal italic leading-5", raised)}>All</button></div>
          </div>
          <div className="flex h-[506px] gap-1">
            <ul className={clsx("w-[150px] px-[3px] pt-[3px]", sunkenTeal)}>
              {signals.map((s) => (
                <li key={s} className="mb-[3px] h-[15px] bg-black leading-[15px] font-normal text-[#53cfaf]">{s}</li>
              ))}
            </ul>
            <ScrollBar vertical />
          </div>
          <ScrollBar className="mt-1 w-[150px]" />
          <div className="mt-px border-t border-black py-[2px] pl-1">
            <OptionMenu label="Layer mode" options={["Replace layers"]} className={clsx("h-[29px]", raised)} />
          </div>
        </div>
        <div className="flex min-w-0 flex-1 flex-col bg-[#53cfaf]">
          <div className="flex h-[29px] items-stretch bg-[#9bdbdb]">
            <button className={clsx("w-[208px] italic", raised)}>Categories (22)</button>
            <span className="w-[52px] pl-0.5 leading-[30px]">Meas:</span>
            <OptionMenu label="Meas" options={["All"]} className={clsx("flex-1", raised)} />
          </div>
          <div className="flex h-[444px] gap-1">
            <ul className={clsx("w-[304px] overflow-hidden px-[3px] pt-[3px]", sunkenTeal)}>
              {categories.map(([name, extra]) => (
                <li
                  key={name}
                  onClick={() => setSelected(name)}
                  className={clsx(
                    "mb-[2px] h-4 leading-4 whitespace-pre",
                    selected === name && "bg-black font-normal text-[#9bdbdb]"
                  )}
                >
                  {name.padEnd(extra ? 26 : 0) + extra}
                </li>
              ))}
            </ul>
            <ScrollBar vertical />
          </div>
          <ScrollBar fill="w-[256px]" className="mt-1 w-[304px]" />
          <div className="mt-0.5 flex h-6 gap-1 pr-0.5 pl-0.5">
            <button className={clsx("w-[53px]", raised)}>First</button>
            <button className={clsx("w-[44px] whitespace-nowrap", raised)}>&lt;---</button>
            <button className={clsx("w-[44px] whitespace-nowrap", raised)}>---&gt;</button>
            <button className={clsx("w-[44px]", raised)}>Last</button>
            <label htmlFor="index" className="leading-6">Index:</label>
            <input id="index" defaultValue="87550" className={clsx("w-0 min-w-0 flex-1 pl-1 leading-5 outline-none", sunkenTeal)} />
          </div>
          <div className="mt-[2px] flex h-[33px]">
            <div className="flex w-[221px] border border-black">
              <div className="w-[124px] border-r border-black py-px pl-1.5">
                <OptionMenu label="Zoom mode" options={["Auto Zoom"]} className={clsx("h-full", raised)} />
              </div>
              <span className="w-[27px] bg-[#9bdbdb] leading-8">Sv:</span>
              <div className="flex-1 bg-[#1be81b] p-px pl-1.5">
                <OptionMenu label="Severity" options={[""]} className="h-full border-2 border-t-[#a8ffa8] border-r-[#0c7f0c] border-b-[#0c7f0c] border-l-[#a8ffa8]" />
              </div>
            </div>
            <label className="ml-[4px] flex h-7 items-center gap-1 whitespace-nowrap">
              <input type="checkbox" className={clsx("h-[14px] w-[14px] appearance-none", raisedTeal)} />
              Show All
            </label>
          </div>
          <div className="mt-px flex h-8 justify-end gap-1 pr-0.5 pb-px">
            <SmallButton label="DEL" color="#e11" className="w-[30px]" />
            <SmallButton label="REF" color="#1d1" className="w-[30px]" />
            <SmallButton label="UNDO" className="w-[34px]" />
          </div>
        </div>
      </div>
      <div className="mt-[2px] h-[19px] bg-[#53cfaf] text-center leading-[19px] whitespace-pre">sig12t 3.208mil  r5.4</div>
      <div className="mt-[2px] h-[19px] bg-[#ffffcc] pl-px leading-[19px] whitespace-nowrap">ERF--&gt; shaved_line = 3937.008 3937.047 3937.087</div>
      <div className="mt-px flex h-[33px] gap-1 bg-[#9bdbdb] p-[2px]">
        <button className={clsx("flex-1", raised)}>Close</button>
        {viewerActions.map((a) => (
          <button key={a.id} aria-label={a.id} className={clsx("w-[30px] p-px", raised)}>
            <svg viewBox="0 0 24 24" className="h-full w-full border border-black">{a.art}</svg>
          </button>
        ))}
      </div>
    </section>
  );
}

const sheetIcon = (
  <svg width="22" height="26" viewBox="0 0 22 26">
    <path d="M4 1h12l5 5v19H4z" fill="#e8efff" stroke="#8ca8d8" />
    <path d="M7 13h11M7 17h11M7 21h11M11 11v12M15 11v12" stroke="#6f8fd0" />
    <rect x="1" y="3" width="11" height="11" fill="#fff" stroke="#3a9a3a" />
    <path d="M3 5l7 7M10 5l-7 7" stroke="#2a8a2a" strokeWidth="2" />
  </svg>
);

const tasks: { name: string; icon: ReactNode; active?: boolean }[] = [
  {
    name: "EDS工程系统",
    icon: <svg width="22" height="28" viewBox="0 0 22 28"><path d="M6 1h15l-3 25H1z" fill="#18904a" /><path d="M8 24l3-18h9M9 15h8" fill="none" stroke="#fff" strokeWidth="4" /></svg>,
  },
  {
    name: "[2] Administrator...",
    icon: <svg width="24" height="28" viewBox="0 0 24 28"><path d="M1 1h22v26H1z" fill="#2b55d8" /><path d="M6 1h12v9H6z" fill="#dde" /><path d="M13 3h3v5h-3z" fill="#224" /><path d="M4 13h16v14H4z" fill="#fff" /><path d="M5 16h14M5 19h14M5 22h8" stroke="#e77" /></svg>,
  },
  {
    name: "兴森快捷衡阳分公...",
    icon: <svg width="24" height="24" viewBox="0 0 24 24"><path d="M12 1c9 0 12 6 11 11-1 6-6 8-8 11H9C7 20 2 18 1 12 0 7 3 1 12 1z" fill="#f6cc78" /><path d="M12 2v20M6 3l5 19M18 3l-5 19M2 9l8 12M22 9l-8 12" stroke="#d89a3c" /><path d="M14 7l2 4h5l-4 3 2 5-5-3-4 3 1-5-4-3h5z" fill="#ee7a1c" /></svg>,
  },
  { name: "EV319012A0制作...", icon: sheetIcon },
  { name: "EV319012A0-预审...", icon: sheetIcon },
  {
    name: "Genesis",
    icon: <svg width="24" height="22" viewBox="0 0 24 22"><path d="M1 3l5-2 5 3-6 4zM2 10l4 8 4 3-2-12z" fill="#356f9a" /><ellipse cx="14" cy="12" rx="9" ry="8" fill="#17a08f" /><ellipse cx="14" cy="12" rx="5" ry="4" fill="#9fe86c" /><circle cx="14" cy="12" r="2" fill="#166" /></svg>,
  },
  { name: "Engineering Tool...", icon: <WindowIcon size={22} /> },
  { name: "Progress", icon: <WindowIcon size={22} /> },
  { name: "Graphic Editor 9....", icon: <WindowIcon size={22} />, active: true },
];

function SogouMark({ size }: { size: number }) {
  return (
    <svg width={size} height={size} viewBox="0 0 28 28" className="shrink-0">
      <path d="M1 5L24 0l4 23-22 5z" fill="#ee5a24" />
      <path d="M22 7c-6-2-13 0-13 4 0 5 12 2 12 7 0 4-8 4-13 2" fill="none" stroke="#fff" strokeWidth="4" />
    </svg>
  );
}

function Taskbar() {
  return (
    <footer className={clsx("flex h-10 shrink-0 items-center bg-[#1b2a30] text-[12px] text-white", sans)}>
      <button aria-label="Start" className="w-[48px] pl-4">
        <svg width="16" height="17" viewBox="0 0 16 17" fill="#fff"><path d="M0 2.500l7-1V8H0zM8 1.300L16 0v8H8zM0 9h7v6.500l-7-1zM8 9h8v8l-8-1.300z" /></svg>
      </button>
      <button aria-label="Search" className="w-[52px] pl-4">
        <svg width="20" height="22" viewBox="0 0 20 22" fill="none" stroke="#fff" strokeWidth="2"><circle cx="9" cy="10" r="8" /><path d="M9 6a4 4 0 1 0 4 4M15 17l3 4" /></svg>
      </button>
      <button aria-label="Files" className="w-[58px] pl-[18px]">
        <svg width="22" height="20" viewBox="0 0 22 20"><path d="M0 1h8l2 2h12v16H0z" fill="#f0b83c" /><path d="M0 6h22v13H0z" fill="#ffe08a" /><path d="M4 11h14v8h-4v-4H8v4H4z" fill="#3d9be0" /></svg>
      </button>
      <div className="flex h-full flex-1 gap-[9px]">
        {tasks.map((t) => (
          <button
            key={t.name}
            className={clsx("flex h-full items-center gap-1 border-b-2 border-[#76b9ed] text-left whitespace-nowrap", t.active ? "-ml-[9px] w-[160px] bg-[#4b585c] pl-2.5" : "w-[152px] pl-1.5")}
          >
            <span className="flex w-6 justify-center">{t.icon}</span>
            {t.name}
          </button>
        ))}
      </div>
      <div className="flex w-[322px] items-center">
        <ChevronUp size={16} className="ml-1.5 shrink-0" />
        <svg width="14" height="18" viewBox="0 0 14 18" className="ml-2 shrink-0"><rect width="14" height="18" rx="2" fill="#1493f0" /><path d="M4 3l7 7-4 5z" fill="#fff" /></svg>
        <Volume2 size={17} strokeWidth={1.500} className="ml-2 shrink-0" />
        <svg width="16" height="16" viewBox="0 0 16 16" className="ml-2 shrink-0"><circle cx="8" cy="8" r="8" fill="#f8d820" /><circle cx="8" cy="8" r="5" fill="#6fbf2a" /><path d="M8 4v8M4 8h8" stroke="#065" strokeWidth="2" /></svg>
        <span className="ml-2 text-[14px]">中</span>
        <span className="ml-3"><SogouMark size={18} /></span>
        <div className="ml-3 w-[66px] text-center leading-[18px]">
          <div>21:07 周五</div>
          <div>2023/12/15</div>
        </div>
        <svg width="16" height="15" viewBox="0 0 16 15" className="ml-4 shrink-0"><path d="M.5 .5h15v14H.5z" fill="none" stroke="#fff" /><path d="M6 4l5 3.500L6 11z" fill="#fff" /></svg>
        <span className="relative ml-6 shrink-0">
          <MessageSquareText size={19} fill="#fff" stroke="#1b2a30" />
          <span className="absolute top-2 left-2 flex h-4 w-4 items-center justify-center rounded-full border border-gray-400 bg-[#333c40] text-[11px]">1</span>
        </span>
      </div>
    </footer>
  );
}

function InputMethodBar() {
  return (
    <div className="absolute right-0 bottom-10 flex h-[27px] w-[178px] items-center justify-between bg-white pr-1.5 text-[#1668d8]">
      <SogouMark size={30} />
      <span className={clsx("text-[15px]", sans)}>中</span>
      <svg width="12" height="12" viewBox="0 0 12 12"><circle cx="2.500" cy="3" r="1.500" fill="none" stroke="#1668d8" /><path d="M8 6h3v3l-2 3H8l1-3H8z" fill="#1668d8" /></svg>
      <Mic size={16} fill="#1668d8" />
      <Keyboard size={17} />
      <Shirt size={17} fill="#1668d8" />
      <svg width="14" height="14" viewBox="0 0 14 14"><rect width="6" height="6" rx="1" fill="#a76de0" /><rect x="8.500" y=".5" width="5" height="5" rx="1" fill="none" stroke="#e86a6a" /><rect y="8" width="6" height="6" rx="1" fill="#d870c0" /><rect x="8" y="8" width="6" height="6" rx="1" fill="#f08a5a" /></svg>
    </div>
  );
}

/* Sliver of the window that lies behind the editor */
function BackgroundEdge() {
  return (
    <svg className="absolute top-0 left-0 h-full w-[9px]">
      <path d="M0 0h9v5L2 26H0z" fill="#d6e4ea" />
      <path d="M5 22l4-14" stroke="#2a8a4a" strokeWidth="2" />
      <path d="M5 39h4v18H5z" fill="#e8693c" />
      <path d="M4 925h5v36H4z" fill="#7c8794" />
      <path d="M3 962h6v21H3z" fill="#3ccf5a" />
    </svg>
  );
}

export default function App() {
  return (
    <div className="relative flex h-screen flex-col overflow-hidden bg-[#b5c5df] text-black">
      <BackgroundEdge />
      <main className="ml-[9px] flex min-h-0 flex-1 flex-col border-t border-[#777] bg-black">
        <header className={clsx("flex h-[30px] shrink-0 items-center bg-white pl-[7px] text-[13px] text-[#999]", sans)}>
          <WindowIcon />
          <h1 className="ml-[5px]">Graphic Editor 9.07b2 (00@HY-HYCAM-PC531 - Windows, pid:3728)</h1>
          <div className="ml-auto flex items-center gap-8 pr-2 text-[#777]">
            <button aria-label="Minimize"><Minus size={14} strokeWidth={2} /></button>
            <button aria-label="Maximize"><Square size={12} strokeWidth={2} /></button>
            <button aria-label="Close window"><X size={16} strokeWidth={1.500} /></button>
          </div>
        </header>
        <MenuBar />
        <div className="flex min-h-0 flex-1">
          <Sidebar />
          <Canvas />
          <RightPanel />
        </div>
        <CommandBar />
        <div className={clsx("h-[30px] shrink-0 border-t-3 border-b-2 border-t-[#5f9090] border-b-white bg-black px-px pt-px pb-px text-center text-[12px]", mono)}>
          <div className="h-full border-t-3 border-b-2 border-l-2 border-t-[#d8ffff] border-b-[#5f9090] border-l-[#d8ffff] bg-[#b0ffff] leading-[19px]">
            DX=0.0069027,DY=-0.0069026,D=0.0097617
          </div>
        </div>
      </main>
      <HistogramWindow />
      <ResultsViewer />
      <InputMethodBar />
      <Taskbar />
    </div>
  );
}
